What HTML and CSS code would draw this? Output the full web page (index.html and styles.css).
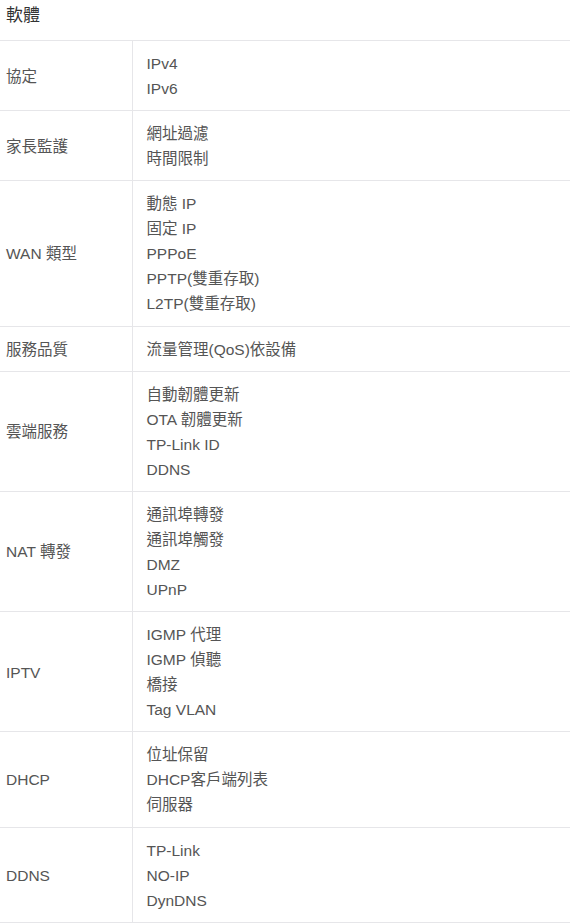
FILE: index.html
```html
<!DOCTYPE html>
<html lang="zh-Hant">
<head>
    <meta charset="UTF-8">
    <meta name="viewport" content="width=device-width, initial-scale=1.0">
    <title>軟體規格</title>
    <link rel="stylesheet" href="styles.css">
</head>
<body>
    <h2 class="spec-title">軟體</h2>

    <table class="spec-table">
        <tr>
            <th>協定</th>
            <td>IPv4<br>IPv6</td>
        </tr>
        <tr>
            <th>家長監護</th>
            <td>網址過濾<br>時間限制</td>
        </tr>
        <tr>
            <th>WAN 類型</th>
            <td>動態 IP<br>固定 IP<br>PPPoE<br>PPTP(雙重存取)<br>L2TP(雙重存取)</td>
        </tr>
        <tr>
            <th>服務品質</th>
            <td>流量管理(QoS)依設備</td>
        </tr>
        <tr>
            <th>雲端服務</th>
            <td>自動韌體更新<br>OTA 韌體更新<br>TP-Link ID<br>DDNS</td>
        </tr>
        <tr>
            <th>NAT 轉發</th>
            <td>通訊埠轉發<br>通訊埠觸發<br>DMZ<br>UPnP</td>
        </tr>
        <tr>
            <th>IPTV</th>
            <td>IGMP 代理<br>IGMP 偵聽<br>橋接<br>Tag VLAN</td>
        </tr>
        <tr>
            <th>DHCP</th>
            <td>位址保留<br>DHCP客戶端列表<br>伺服器</td>
        </tr>
        <tr>
            <th>DDNS</th>
            <td>TP-Link<br>NO-IP<br>DynDNS</td>
        </tr>
    </table>
</body>
</html>
```

FILE: styles.css
```css
* {
    margin: 0;
    padding: 0;
    box-sizing: border-box;
}

body {
    font-family: 'Liberation Sans', 'Noto Sans CJK TC', sans-serif;
    background: #fff;
    color: #555;
}

.spec-title {
    height: 40px;
    padding: 4px 6px 0;
    font-size: 17px;
    font-weight: normal;
    line-height: 24px;
    color: #333;
}

.spec-table {
    width: 100%;
    border-collapse: collapse;
    font-size: 15.5px;
    line-height: 25px;
}

.spec-table th,
.spec-table td {
    padding: 10px 0 9.2px;
    border-top: 1px solid #e6e6e9;
    border-bottom: 1px solid #e6e6e9;
    text-align: left;
    vertical-align: middle;
}

.spec-table th {
    width: 132px;
    padding-left: 6px;
    font-weight: normal;
    color: #555;
    border-right: 1px solid #e6e6e9;
}

.spec-table td {
    padding-left: 14px;
    color: #555;
}
```
